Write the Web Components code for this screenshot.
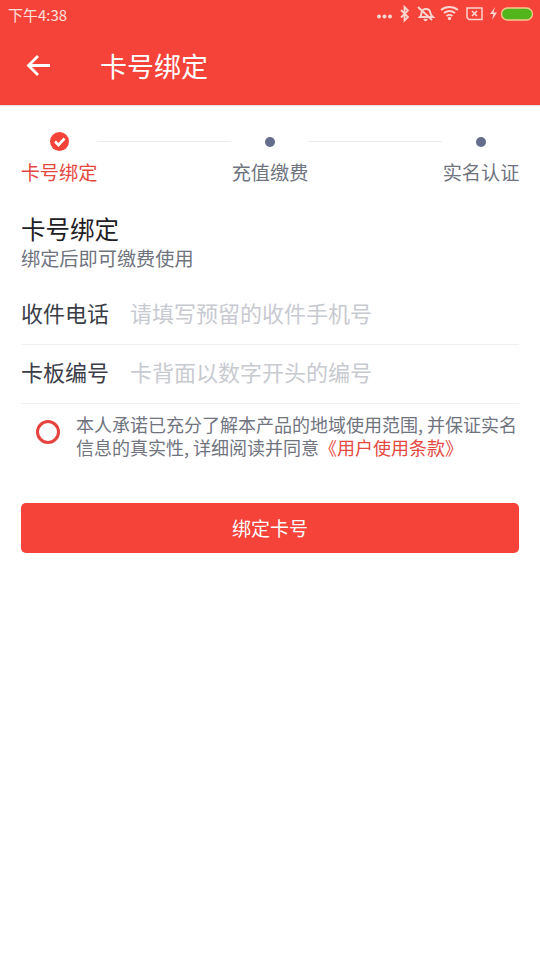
<!DOCTYPE html>
<html lang="zh">
<head>
<meta charset="utf-8">
<title>卡号绑定</title>
<style>
  html, body { margin: 0; background: #fff; }
  body { width: 540px; height: 960px; overflow: hidden; font-family: "Noto Sans CJK SC", "Noto Sans", sans-serif; }
  agree-row div { white-space: nowrap; }
  agree-row .c { letter-spacing: 4px; }
  agree-row a { color: #e5483f; }
</style>
</head>
<body>
<app-header title="卡号绑定"></app-header>
<step-bar></step-bar>
<section-title heading="卡号绑定" sub="绑定后即可缴费使用"></section-title>
<form-row label="收件电话" hint="请填写预留的收件手机号"></form-row>
<form-row label="卡板编号" hint="卡背面以数字开头的编号"></form-row>
<agree-row>
    <div>本人承诺已充分了解本产品的地域使用范围<span class="c">,</span>并保证实名</div>
    <div>信息的真实性<span class="c">,</span>详细阅读并同意<a>《用户使用条款》</a></div>
</agree-row>
<bind-button>绑定卡号</bind-button>

<script>
class AppHeader extends HTMLElement {
    constructor() {
        super();
        this.attachShadow({ mode: "open" });
        const title = this.getAttribute("title");
        this.removeAttribute("title");
        this.shadowRoot.innerHTML = `
            <style>
                :host { display: block; background: #f54339; color: #fff; height: 105px; box-shadow: 0 1px 1px rgba(0,0,0,.12); }
                .status { height: 28px; display: flex; align-items: center; justify-content: space-between; padding-left: 8px; }
                .time { font-size: 15px; color: #fde0dc; }
                .status svg { display: block; }
                .nav { height: 74px; display: flex; align-items: center; padding-left: 26px; }
                .nav svg { display: block; }
                h1 { margin: 0 0 0 49px; font-size: 27px; font-weight: 400; line-height: 1; }
            </style>
            <div class="status">
                <span class="time">下午4:38</span>
                <svg width="180" height="28" viewBox="360 0 180 28" fill="none" stroke="#fbd5cf">
                    <g fill="#fbd5cf" stroke="none"><circle cx="379" cy="16.500" r="2"/><circle cx="384.500" cy="16.500" r="2"/><circle cx="390" cy="16.500" r="2"/></g>
                    <path d="M401 10l7 7-3.500 3.500V7l3.500 3.500-7 7" stroke-width="1.800"/>
                    <path d="M420 17c2-2 1-4 2-6 1-2 5-3 7-1s1 3 2 5l2 2zM418 7l14 13M424 19c1 1.500 2 1.500 3 0" stroke-width="2"/>
                    <path d="M441 10c5-4 12-4 17 0M444 13c3.500-2.500 7.500-2.500 11 0M446.500 16c2-1.500 4-1.500 6 0" stroke-width="1.900"/>
                    <circle cx="449.500" cy="18.500" r="1.700" fill="#fbd5cf" stroke="none"/>
                    <path d="M467 8h15v11.500h-13l-2-2z" stroke-width="1.500"/>
                    <path d="M472 11l5 5M477 11l-5 5" stroke-width="1.700"/>
                    <path d="M495 7l-5 7h3.500l-1.500 6 5-7.500h-3.500z" fill="#fbd5cf" stroke="none"/>
                    <rect x="501.500" y="8" width="31" height="12" rx="6" fill="#52b51c" stroke="#f7c98f" stroke-width="1.300"/>
                </svg>
            </div>
            <div class="nav">
                <svg width="25" height="23" viewBox="0 0 25 23" fill="none" stroke="#fff" stroke-width="2.800">
                    <path d="M24 11.500H3M12 2L2.500 11.500 12 21"/>
                </svg>
                <h1>${title}</h1>
            </div>
        `;
    }
}
customElements.define("app-header", AppHeader);

class StepBar extends HTMLElement {
    constructor() {
        super();
        this.attachShadow({ mode: "open" });
        const steps = ["卡号绑定", "充值缴费", "实名认证"];
        const items = steps.map((s, i) => `
            <div class="step ${i === 0 ? "on" : ""}">
                <div class="mark">${i === 0
                    ? `<svg width="19" height="19" viewBox="0 0 19 19"><circle cx="9.500" cy="9.500" r="9.500" fill="#f54339"/><path d="M5 9.500l3.500 3.500L14.500 6.500" fill="none" stroke="#fff" stroke-width="2.600"/></svg>`
                    : `<span class="dot"></span>`}</div>
                <div class="name">${s}</div>
            </div>`);
        this.shadowRoot.innerHTML = `
            <style>
                :host { display: block; padding: 27px 20px 0; }
                .bar { display: flex; justify-content: space-between; position: relative; }
                .step { width: 78px; text-align: center; color: #70747f; font-size: 19.200px; line-height: 28px; white-space: nowrap; }
                .step.on { color: #e5483f; }
                .mark { height: 19px; display: flex; align-items: center; justify-content: center; margin-bottom: 7px; }
                .mark svg { display: block; }
                .dot { width: 10px; height: 10px; border-radius: 50%; background: #646e8c; }
                .line { position: absolute; top: 9px; height: 1px; background: #e9ebee; width: 134px; }
            </style>
            <div class="bar">
                ${items.join("")}
                <span class="line" style="left:77px"></span>
                <span class="line" style="left:288px"></span>
            </div>
        `;
    }
}
customElements.define("step-bar", StepBar);

class SectionTitle extends HTMLElement {
    constructor() {
        super();
        this.attachShadow({ mode: "open" });
        this.shadowRoot.innerHTML = `
            <style>
                :host { display: block; padding: 26px 21px 16px; }
                .h { font-size: 24.500px; line-height: 34px; color: #1f2026; }
                .s { font-size: 19.200px; line-height: 24px; color: #70747f; }
            </style>
            <div class="h">${this.getAttribute("heading")}</div>
            <div class="s">${this.getAttribute("sub")}</div>
        `;
    }
}
customElements.define("section-title", SectionTitle);

class FormRow extends HTMLElement {
    constructor() {
        super();
        this.attachShadow({ mode: "open" });
        this.shadowRoot.innerHTML = `
            <style>
                :host { display: block; margin: 0 21px; height: 59px; padding-bottom: 6px; border-bottom: 1px solid #f0f1f3; box-sizing: border-box; }
                .r { display: flex; align-items: center; height: 100%; }
                .l { font-size: 22px; color: #3a3d48; width: 109px; }
                .p { font-size: 22px; color: #c8cad1; }
            </style>
            <div class="r"><span class="l">${this.getAttribute("label")}</span><span class="p">${this.getAttribute("hint")}</span></div>
        `;
    }
}
customElements.define("form-row", FormRow);

class AgreeRow extends HTMLElement {
    constructor() {
        super();
        this.attachShadow({ mode: "open" });
        this.shadowRoot.innerHTML = `
            <style>
                :host { display: flex; padding: 9px 21px 0 36px; color: #70747f; font-size: 18px; line-height: 23px; }
                .o { flex: none; width: 24px; height: 24px; border: 3px solid #e5433d; border-radius: 50%; box-sizing: border-box; margin: 7px 16px 0 0; }
            </style>
            <span class="o"></span>
            <div><slot></slot></div>
        `;
    }
}
customElements.define("agree-row", AgreeRow);

class BindButton extends HTMLElement {
    constructor() {
        super();
        this.attachShadow({ mode: "open" });
        this.shadowRoot.innerHTML = `
            <style>
                :host { display: block; margin: 44px 21px 0; }
                button { display: block; width: 100%; height: 50px; border: 0; border-radius: 5px; background: #f54339; color: #fff; font: inherit; font-size: 19px; padding: 0 0 2px; }
            </style>
            <button><slot></slot></button>
        `;
    }
}
customElements.define("bind-button", BindButton);
</script>
</body>
</html>
